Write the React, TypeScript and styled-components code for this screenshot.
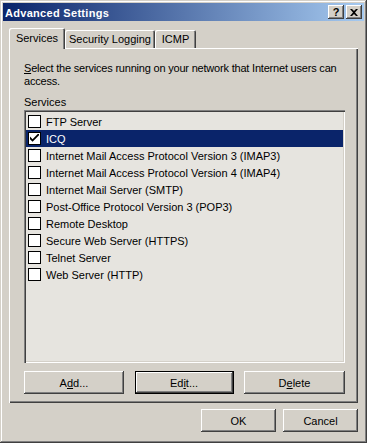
import React from 'react'
import styled, { createGlobalStyle } from 'styled-components'

const GlobalStyle = createGlobalStyle`
  html, body {
    margin: 0;
    padding: 0;
    background: #d4d0c8;
  }
  * {
    box-sizing: border-box;
  }
  body {
    font-family: Tahoma, "Liberation Sans", Arial, sans-serif;
    font-size: 11px;
    color: #000;
  }
`

const services = [
  { name: 'FTP Server', checked: false },
  { name: 'ICQ', checked: true },
  { name: 'Internet Mail Access Protocol Version 3 (IMAP3)', checked: false },
  { name: 'Internet Mail Access Protocol Version 4 (IMAP4)', checked: false },
  { name: 'Internet Mail Server (SMTP)', checked: false },
  { name: 'Post-Office Protocol Version 3 (POP3)', checked: false },
  { name: 'Remote Desktop', checked: false },
  { name: 'Secure Web Server (HTTPS)', checked: false },
  { name: 'Telnet Server', checked: false },
  { name: 'Web Server (HTTP)', checked: false },
]

const Window = styled.div`
  width: 367px;
  height: 443px;
  padding: 3px;
  background: #d4d0c8;
  display: flex;
  flex-direction: column;
  box-shadow: inset -1px -1px #404040, inset 1px 1px #d4d0c8,
    inset -2px -2px #808080, inset 2px 2px #ffffff;
`

const TitleBar = styled.div`
  height: 18px;
  display: flex;
  align-items: center;
  justify-content: space-between;
  padding: 0 2px;
  background: linear-gradient(to right, #0a246a, #a6caf0);
`

const Title = styled.span`
  color: #fff;
  font-weight: bold;
  font-size: 11px;
  padding-top: 1px;
  letter-spacing: 0.3px;
`

const CaptionButtons = styled.div`
  display: flex;
  gap: 2px;
`

const CaptionButton = styled.div`
  width: 16px;
  height: 14px;
  background: #d4d0c8;
  display: flex;
  align-items: center;
  justify-content: center;
  box-shadow: inset -1px -1px #404040, inset 1px 1px #ffffff,
    inset -2px -2px #808080, inset 2px 2px #d4d0c8;
  font-weight: bold;
  font-size: 11px;
  line-height: 1;
`

const Body = styled.div`
  flex: 1;
  display: flex;
  flex-direction: column;
  padding: 7px 6px 0 6px;
`

const TabStrip = styled.div`
  display: flex;
  height: 20px;
  align-items: flex-end;
  position: relative;
  z-index: 1;
`

const Tab = styled.div<{ $active?: boolean; $w: number }>`
  width: ${(p) => p.$w}px;
  height: ${(p) => (p.$active ? 21 : 18)}px;
  margin-bottom: ${(p) => (p.$active ? -1 : 0)}px;
  background: #d4d0c8;
  display: flex;
  align-items: center;
  justify-content: center;
  padding-bottom: ${(p) => (p.$active ? 2 : 0)}px;
  border-radius: 2px 2px 0 0;
  box-shadow: inset 1px 1px #ffffff, inset -1px 0 #404040, inset -2px 0 #808080;
`

const Panel = styled.div`
  height: 355px;
  flex-shrink: 0;
  padding: 14px 13px 0 15px;
  box-shadow: inset 1px 1px #ffffff, inset -1px -1px #404040,
    inset -2px -2px #808080;
`

const Description = styled.p`
  margin: 0;
  line-height: 13px;
  white-space: nowrap;
  letter-spacing: -0.2px;
`

const FieldLabel = styled.div`
  margin-top: 8px;
  line-height: 13px;
`

const ListBox = styled.div`
  margin-top: 1px;
  width: 321px;
  height: 253px;
  padding: 3px 2px 2px 2px;
  background: #e6e4df;
  box-shadow: inset 1px 1px #808080, inset 2px 2px #404040,
    inset -1px -1px #ffffff, inset -2px -2px #d4d0c8;
`

const Row = styled.div<{ $selected?: boolean }>`
  height: 17px;
  display: flex;
  align-items: center;
  padding-left: 2px;
  background: ${(p) => (p.$selected ? '#0a246a' : 'transparent')};
  color: ${(p) => (p.$selected ? '#fff' : '#000')};
`

const CheckBox = styled.span`
  width: 13px;
  height: 13px;
  margin-right: 5px;
  background: #fff;
  border: 1px solid #000;
  display: flex;
  align-items: center;
  justify-content: center;
`

const ButtonRow = styled.div`
  margin-top: 8px;
  width: 321px;
  display: flex;
  justify-content: space-between;
`

const Button = styled.div<{ $default?: boolean; $w: number }>`
  width: ${(p) => p.$w}px;
  height: 23px;
  display: flex;
  align-items: center;
  justify-content: center;
  background: #d4d0c8;
  box-shadow: ${(p) =>
    p.$default
      ? 'inset 0 0 0 1px #000, inset -2px -2px #404040, inset 2px 2px #ffffff, inset -3px -3px #808080'
      : 'inset -1px -1px #404040, inset 1px 1px #ffffff, inset -2px -2px #808080, inset 2px 2px #d4d0c8'};
`

const Footer = styled.div`
  margin-top: 6px;
  display: flex;
  justify-content: flex-end;
  gap: 7px;
`

const Check = () => (
  <svg width="9" height="9" viewBox="0 0 7 7">
    <path d="M0 2 L0 4 L2 6 L7 1 L7 -1 L2 4 Z" fill="#000" />
  </svg>
)

export default function App() {
  return (
    <>
      <GlobalStyle />
      <Window>
        <TitleBar>
          <Title>Advanced Settings</Title>
          <CaptionButtons>
            <CaptionButton>?</CaptionButton>
            <CaptionButton>
              <svg width="8" height="7" viewBox="0 0 8 7">
                <path d="M0 0 L2 0 L4 2 L6 0 L8 0 L5 3.5 L8 7 L6 7 L4 5 L2 7 L0 7 L3 3.5 Z" fill="#000" />
              </svg>
            </CaptionButton>
          </CaptionButtons>
        </TitleBar>
        <Body>
          <TabStrip>
            <Tab $active $w={56}>Services</Tab>
            <Tab $w={90}>Security Logging</Tab>
            <Tab $w={41}>ICMP</Tab>
          </TabStrip>
          <Panel>
            <Description>
              <u>S</u>elect the services running on your network that Internet users can
              <br />
              access.
            </Description>
            <FieldLabel>Services</FieldLabel>
            <ListBox>
              {services.map((s, i) => (
                <Row key={s.name} $selected={i === 1}>
                  <CheckBox>{s.checked && <Check />}</CheckBox>
                  {s.name}
                </Row>
              ))}
            </ListBox>
            <ButtonRow>
              <Button $w={100}>
                <span>A<u>d</u>d...</span>
              </Button>
              <Button $w={99} $default>
                <span>Ed<u>i</u>t...</span>
              </Button>
              <Button $w={101}>
                <span>D<u>e</u>lete</span>
              </Button>
            </ButtonRow>
          </Panel>
          <Footer>
            <Button $w={75}>OK</Button>
            <Button $w={75}>Cancel</Button>
          </Footer>
        </Body>
      </Window>
    </>
  )
}
